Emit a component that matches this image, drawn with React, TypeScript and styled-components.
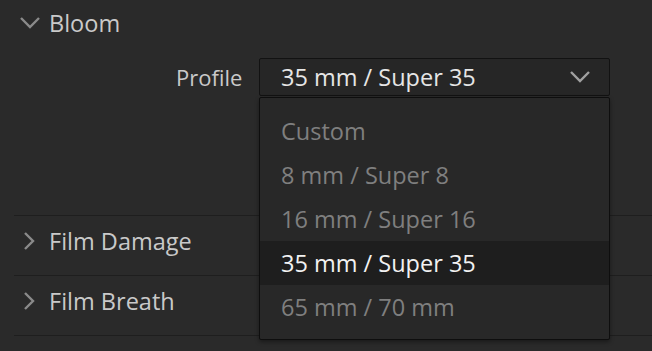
import React from 'react';
import styled, { createGlobalStyle } from 'styled-components';

const GlobalStyle = createGlobalStyle`
  html, body {
    margin: 0;
    padding: 0;
    background-color: #2a2a2a;
    font-family: "Open Sans", "Noto Sans", sans-serif;
  }
`;

const Panel = styled.div`
  width: 652px;
  height: 351px;
  padding-left: 14px;
  box-sizing: border-box;
  overflow: hidden;
  background-color: #2a2a2a;
`;

const Section = styled.div<{ $height: number; $divider?: boolean }>`
  height: ${(p) => p.$height}px;
  border-top: ${(p) => (p.$divider ? '1px solid #1e1e1e' : 'none')};
  box-sizing: border-box;
`;

const SectionHeader = styled.div<{ $height: number }>`
  height: ${(p) => p.$height}px;
  display: flex;
  align-items: center;
  gap: 9px;
  padding-left: 6px;
  color: #c9c9c9;
  font-size: 23.5px;
`;

const Chevron = styled.svg`
  width: 20px;
  height: 18px;
  flex-shrink: 0;
`;

const FieldRow = styled.div`
  display: flex;
  align-items: center;
  gap: 18px;
  padding-left: 162px;
  margin-top: 12px;
`;

const FieldLabel = styled.div`
  color: #c9c9c9;
  font-size: 22px;
  width: 65px;
  text-align: right;
  white-space: nowrap;
`;

const SelectWrap = styled.div`
  position: relative;
  width: 351px;
`;

const SelectBox = styled.div`
  height: 38px;
  box-sizing: border-box;
  border: 1px solid #121212;
  border-radius: 2px;
  background-color: #262626;
  display: flex;
  align-items: center;
  justify-content: space-between;
  padding: 0 19px 0 21px;
  color: #e6e6e6;
  font-size: 23.5px;
`;

const Menu = styled.div`
  position: absolute;
  top: 39px;
  left: 0;
  right: 0;
  box-sizing: border-box;
  border: 1px solid #0e0e0e;
  border-radius: 2px;
  background-color: #282828;
  padding: 11px 0 10px;
  box-shadow: 0 2px 4px rgba(0, 0, 0, 0.4);
  z-index: 2;
`;

const MenuItem = styled.div<{ $selected?: boolean }>`
  height: 44px;
  display: flex;
  align-items: center;
  padding-left: 21px;
  font-size: 23.5px;
  color: ${(p) => (p.$selected ? '#f2f2f2' : '#7f7f7f')};
  background-color: ${(p) => (p.$selected ? '#1e1e1e' : 'transparent')};
`;

const options = ['Custom', '8 mm / Super 8', '16 mm / Super 16', '35 mm / Super 35', '65 mm / 70 mm'];

const DownIcon = ({ color }: { color: string }) => (
  <Chevron viewBox="0 0 20 18">
    <path d="M1 4 L10 13 L19 4" fill="none" stroke={color} strokeWidth="2.4" />
  </Chevron>
);

const RightIcon = () => (
  <Chevron viewBox="0 0 20 18">
    <path d="M5 1 L13 9 L5 17" fill="none" stroke="#8a8a8a" strokeWidth="2.4" />
  </Chevron>
);

const App = () => {
  const selected = '35 mm / Super 35';
  return (
    <Panel>
      <GlobalStyle />
      {/* Bloom (expanded) */}
      <Section $height={215}>
        <SectionHeader $height={46}>
          <DownIcon color="#8a8a8a" />
          <span>Bloom</span>
        </SectionHeader>
        <FieldRow>
          <FieldLabel>Profile</FieldLabel>
          <SelectWrap>
            <SelectBox>
              <span>{selected}</span>
              <DownIcon color="#a0a0a0" />
            </SelectBox>
            <Menu>
              {options.map((o) => (
                <MenuItem key={o} $selected={o === selected}>
                  {o}
                </MenuItem>
              ))}
            </Menu>
          </SelectWrap>
        </FieldRow>
      </Section>

      <Section $height={60} $divider>
        <SectionHeader $height={50}>
          <RightIcon />
          <span>Film Damage</span>
        </SectionHeader>
      </Section>

      <Section $height={60} $divider>
        <SectionHeader $height={50}>
          <RightIcon />
          <span>Film Breath</span>
        </SectionHeader>
      </Section>

      <Section $height={16} $divider />
    </Panel>
  );
};

export default App;
